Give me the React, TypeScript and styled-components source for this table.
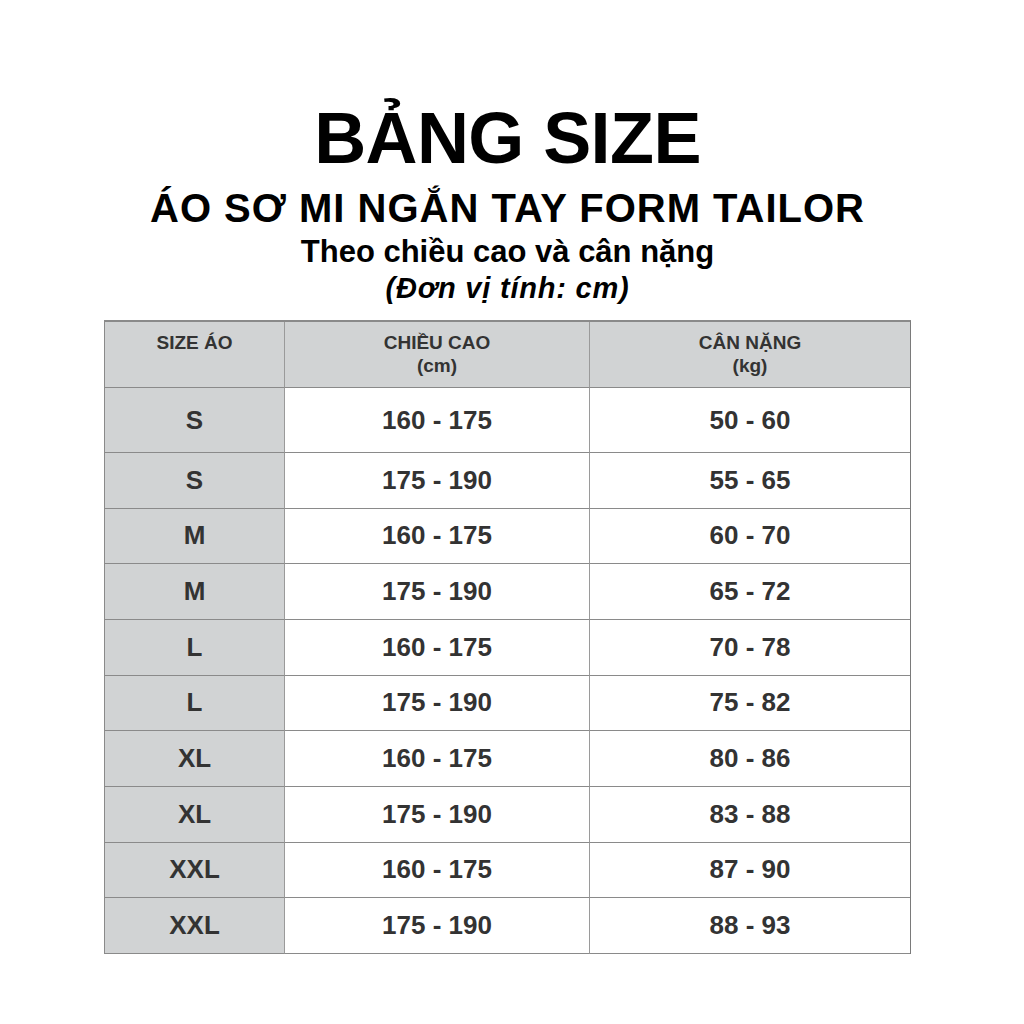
import React from "react";
import styled, { createGlobalStyle } from "styled-components";

const GlobalStyle = createGlobalStyle`
  html, body {
    margin: 0;
    padding: 0;
    background: #fff;
  }
  * {
    box-sizing: border-box;
  }
`;

const Page = styled.div`
  width: 1024px;
  height: 1024px;
  padding: 98px 9px 0 0;
  display: flex;
  flex-direction: column;
  align-items: center;
  font-family: "Liberation Sans", Arial, sans-serif;
  color: #000;
  background: #fff;
`;

const Title = styled.h1`
  margin: 0;
  font-size: 72px;
  line-height: 80px;
  font-weight: 700;
  letter-spacing: -0.6px;
`;

const Subtitle = styled.h2`
  margin: 7px 0 0;
  font-size: 40px;
  line-height: 46px;
  font-weight: 700;
  letter-spacing: 1px;
`;

const Caption = styled.div`
  margin-top: 4px;
  font-size: 31px;
  line-height: 34px;
  font-weight: 700;
`;

const Unit = styled.div`
  margin-top: 3px;
  font-size: 29px;
  line-height: 32px;
  font-weight: 700;
  font-style: italic;
  letter-spacing: 0.8px;
`;

const Table = styled.div`
  align-self: flex-start;
  margin: 16px 0 0 104px;
  display: grid;
  grid-template-columns: 180px 305px 320px;
  border-top: 2px solid #8a8a8a;
  border-left: 1px solid #8a8a8a;
  border-right: 1px solid #7a7a7a;
  color: #333;
`;

const HeadCell = styled.div<{ last?: boolean }>`
  height: 66px;
  padding-top: 9px;
  background: #d1d3d4;
  border-bottom: 1px solid #8a8a8a;
  border-right: ${(p) => (p.last ? "none" : "1px solid #9a9a9a")};
  text-align: center;
  font-size: 19px;
  line-height: 23px;
  font-weight: 700;
`;

const Cell = styled.div<{ shaded?: boolean; last?: boolean; tall?: boolean }>`
  height: ${(p) => (p.tall ? "65px" : "55.67px")};
  display: flex;
  align-items: center;
  justify-content: center;
  background: ${(p) => (p.shaded ? "#d1d3d4" : "#fff")};
  border-bottom: 1px solid #8a8a8a;
  border-right: ${(p) => (p.last ? "none" : "1px solid #9a9a9a")};
  font-size: 26px;
  font-weight: 700;
`;

const rows: [string, string, string][] = [
  ["S", "160 - 175", "50 - 60"],
  ["S", "175 - 190", "55 - 65"],
  ["M", "160 - 175", "60 - 70"],
  ["M", "175 - 190", "65 - 72"],
  ["L", "160 - 175", "70 - 78"],
  ["L", "175 - 190", "75 - 82"],
  ["XL", "160 - 175", "80 - 86"],
  ["XL", "175 - 190", "83 - 88"],
  ["XXL", "160 - 175", "87 - 90"],
  ["XXL", "175 - 190", "88 - 93"],
];

export default function App() {
  return (
    <>
      <GlobalStyle />
      <Page>
        <Title>BẢNG SIZE</Title>
        <Subtitle>ÁO SƠ MI NGẮN TAY FORM TAILOR</Subtitle>
        <Caption>Theo chiều cao và cân nặng</Caption>
        <Unit>(Đơn vị tính: cm)</Unit>
        <Table>
          <HeadCell>SIZE ÁO</HeadCell>
          <HeadCell>
            CHIỀU CAO
            <br />
            (cm)
          </HeadCell>
          <HeadCell last>
            CÂN NẶNG
            <br />
            (kg)
          </HeadCell>
          {rows.map(([size, height, weight], i) => (
            <React.Fragment key={i}>
              <Cell shaded tall={i === 0}>{size}</Cell>
              <Cell tall={i === 0}>{height}</Cell>
              <Cell last tall={i === 0}>{weight}</Cell>
            </React.Fragment>
          ))}
        </Table>
      </Page>
    </>
  );
}
